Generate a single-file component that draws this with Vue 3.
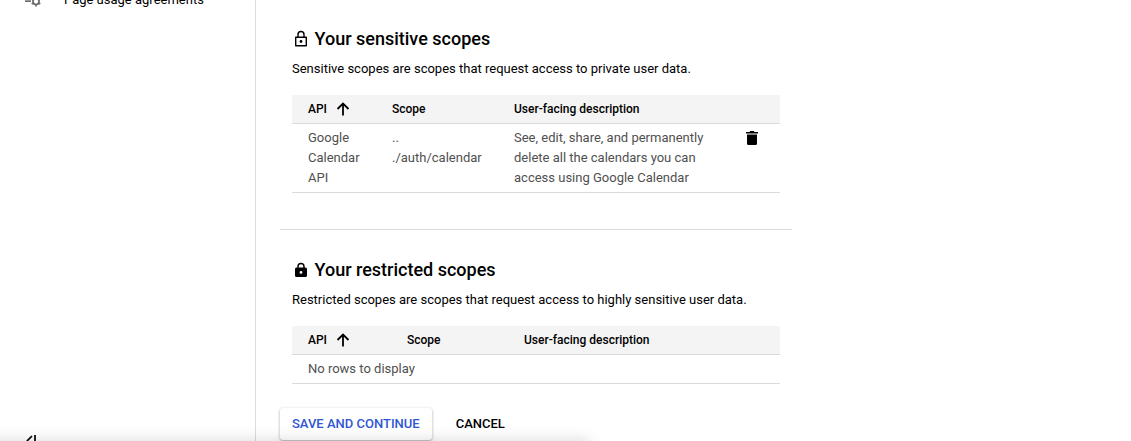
<script setup>
import { ref } from "vue";

const sections = ref([
  {
    name: "sensitive",
    title: "Your sensitive scopes",
    text: "Sensitive scopes are scopes that request access to private user data.",
    rows: [
      {
        api: "Google Calendar API",
        scope: ["..", "./auth/calendar"],
        desc: "See, edit, share, and permanently delete all the calendars you can access using Google Calendar",
      },
    ],
  },
  {
    name: "restricted",
    title: "Your restricted scopes",
    text: "Restricted scopes are scopes that request access to highly sensitive user data.",
    rows: [],
  },
]);

const removeRow = (section, i) => {
  section.rows.splice(i, 1);
};
</script>

<template>
  <div class="app">
    <nav class="side">
      <a class="side-item">
        <svg class="side-icon" viewBox="0 0 18 18">
          <path d="M1 9.300h6v1.700H1z" />
          <circle cx="12" cy="10.500" r="3" fill="none" stroke="currentColor" stroke-width="1.7" />
          <path
            d="M12 5.500v2M12 13.500v2M7.700 8l1.700 1M14.600 12l1.700 1M7.700 13l1.700-1M14.600 9l1.700-1"
            stroke="currentColor"
            stroke-width="1.7"
          />
        </svg>
        <span>Page usage agreements</span>
      </a>
      <svg class="collapse" viewBox="0 0 12 12">
        <path d="M6 1L1.500 5.500 6 10M9 0v12" fill="none" stroke="currentColor" stroke-width="1.7" />
      </svg>
    </nav>

    <main class="content">
      <section v-for="s in sections" :key="s.name" class="section" :class="s.name">
        <h2>
          <svg v-if="s.name == 'sensitive'" class="lock" viewBox="0 0 18 18">
            <path
              d="M3.700 7.200h10.600v8.600H3.700zM6 7V4.500a3 3 0 0 1 6 0V7"
              fill="none"
              stroke="currentColor"
              stroke-width="1.4"
              stroke-linejoin="round"
            />
            <circle cx="9" cy="11.5" r="1.4" />
          </svg>
          <svg v-else class="lock" viewBox="0 0 18 18">
            <path
              fill-rule="evenodd"
              d="M4.500 6.500h9A1.500 1.500 0 0 1 15 8v6.500a1.500 1.500 0 0 1-1.500 1.500h-9A1.500 1.500 0 0 1 3 14.500V8a1.500 1.500 0 0 1 1.500-1.500zM9 10a1.400 1.400 0 1 0 0 2.800a1.400 1.400 0 0 0 0-2.800z"
            />
            <path d="M6 7V5.500a3 3 0 0 1 6 0V7" fill="none" stroke="currentColor" stroke-width="1.4" />
          </svg>
          {{ s.title }}
        </h2>
        <p>{{ s.text }}</p>

        <div class="table">
          <div class="row head">
            <div class="api">
              API
              <svg class="arrow" viewBox="0 0 14 14">
                <path d="M7 13.500V1.800M1.500 7L7 1.500 12.500 7" fill="none" stroke="currentColor" stroke-width="1.8" />
              </svg>
            </div>
            <div>Scope</div>
            <div>User-facing description</div>
          </div>
          <div v-for="(r, i) in s.rows" :key="r.api" class="row">
            <div class="name">{{ r.api }}</div>
            <div>
              <div v-for="line in r.scope" :key="line">{{ line }}</div>
            </div>
            <div class="desc">{{ r.desc }}</div>
            <button class="trash" aria-label="Delete" @click="removeRow(s, i)">
              <svg viewBox="0 0 12 14">
                <path d="M0 1h3.500l.8-1h3.400l.8 1H12v1.600H0zM1 3.500h10v9A1.500 1.500 0 0 1 9.500 14h-7A1.500 1.500 0 0 1 1 12.500z" />
              </svg>
            </button>
          </div>
          <div v-if="!s.rows.length" class="empty">No rows to display</div>
        </div>
      </section>

      <div class="actions">
        <button class="btn save">SAVE AND CONTINUE</button>
        <button class="btn">CANCEL</button>
      </div>
    </main>
    <div class="shade"></div>
  </div>
</template>

<style>
body {
  margin: 0;
  background: #fff;
}
</style>

<style scoped>
.app {
  position: relative;
  display: flex;
  height: 441px;
  overflow: hidden;
  box-sizing: border-box;
  font: 400 13px/20px Roboto, "Liberation Sans", sans-serif;
  color: #000;
}

svg {
  fill: currentColor;
  flex: none;
}

button {
  font: inherit;
  color: inherit;
  border: 0;
  padding: 0;
  background: none;
}

.side {
  flex: none;
  display: flex;
  flex-direction: column;
  justify-content: space-between;
  align-items: flex-start;
  box-sizing: border-box;
  width: 256px;
  height: 457px;
  margin-top: -10px;
  padding-left: 24px;
  border-right: 1px solid #dadce0;
}

.side-item {
  display: flex;
  align-items: center;
  gap: 22px;
}

.side-icon {
  width: 18px;
  height: 18px;
  color: #6b6b6b;
}

.collapse {
  width: 12px;
  height: 12px;
  margin-left: 2px;
}

.content {
  width: 512px;
  margin-left: 24px;
}

.section {
  box-sizing: border-box;
  height: 230px;
  padding: 27px 12px 0;
  border-bottom: 1px solid #dadada;
}

.restricted {
  height: 178px;
  padding-top: 28px;
  border: 0;
}

h2 {
  display: flex;
  align-items: center;
  gap: 4.5px;
  margin: 0 0 8px;
  font-size: 18px;
  font-weight: 500;
  line-height: 24px;
}

.lock {
  width: 18px;
  height: 18px;
}

p {
  margin: 0 0 16px;
  white-space: nowrap;
}

.row {
  display: grid;
  grid-template-columns: 84px 122px 1fr 12px;
  padding: 4px 22px 4px 16px;
  border-bottom: 1px solid #dadada;
  color: #505050;
}

.restricted .row {
  grid-template-columns: 99px 117px 1fr;
}

.head {
  background: #f4f4f4;
  font-size: 12px;
  font-weight: 500;
}

.row.head {
  color: #000;
}

.api {
  display: flex;
  align-items: center;
  gap: 9px;
}

.arrow {
  width: 14px;
  height: 14px;
}

.name {
  width: 60px;
}

.desc {
  width: 200px;
}

.trash {
  width: 12px;
  height: 20px;
  color: #000;
}

.trash svg {
  display: block;
  width: 12px;
  height: 14px;
}

.empty {
  padding: 4px 16px;
  border-bottom: 1px solid #dadada;
  color: #505050;
}

.actions {
  display: flex;
  gap: 12px;
}

.btn {
  height: 32px;
  padding: 0 12px;
  border-radius: 3px;
  font-weight: 500;
  white-space: nowrap;
}

.save {
  color: #3056d3;
  background: #fff;
  box-shadow: 0 1px 3px rgba(0, 0, 0, 0.36);
}

/* shadow of the panel below the page */
.shade {
  position: absolute;
  left: -20px;
  top: 441px;
  width: 610px;
  height: 40px;
  box-shadow: 0 0 16px rgba(0, 0, 0, 0.16);
  pointer-events: none;
}
</style>
